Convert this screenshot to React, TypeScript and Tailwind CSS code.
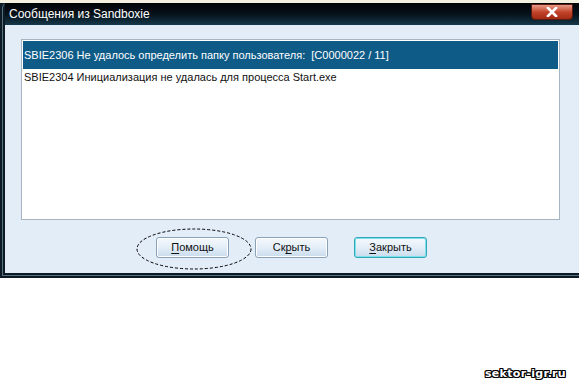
import React from "react";

const Button = ({
  children,
  isDefault = false,
}: {
  children: React.ReactNode;
  isDefault?: boolean;
}) => (
  <div
    className={`w-[73px] h-[21px] rounded-[3px] border flex items-center justify-center text-[11px] text-[#111] bg-gradient-to-b from-[#f4f8fc] via-[#e4eef8] to-[#c9dbec] ${
      isDefault
        ? "border-[#2fa9b8] shadow-[inset_0_0_0_1px_#7fe0ec]"
        : "border-[#8aa2b8] shadow-[inset_0_0_0_1px_#ffffff]"
    }`}
  >
    {children}
  </div>
);

export default function App() {
  return (
    <div className="w-[579px] h-[384px] bg-white relative overflow-hidden font-['Liberation_Sans',Arial,sans-serif]">
      {/* leftover strip of the window behind */}
      <div className="h-[3px] bg-[#f3f0e0]" />

      {/* window */}
      <div className="h-[275px] flex flex-col bg-[#0b1a24] pl-[2px] pb-[2px]">
        <div className="flex-1 flex flex-col bg-[#56707e] pl-px pb-px rounded-tl-[5px]">
          <div className="flex-1 flex flex-col bg-[#0b1a24] pl-[2px] pb-[2px] rounded-tl-[5px]">
            {/* Title bar */}
            <div className="h-[22px] flex items-center relative bg-gradient-to-b from-[#020407] via-[#07121a] to-[#14384b]">
              <span className="text-white text-[12px] pl-[4px]">
                Сообщения из Sandboxie
              </span>
              <div className="absolute right-[6px] top-[1px] w-[42px] h-[16px] rounded-b-[4px] border border-[#5a1a10] bg-gradient-to-b from-[#e79a88] via-[#c2442a] to-[#a32a14] flex items-center justify-center">
                <svg width="12" height="10" viewBox="0 0 12 10">
                  <path
                    d="M2 1 L10 9 M10 1 L2 9"
                    stroke="#ffffff"
                    strokeWidth="2.6"
                    strokeLinecap="square"
                  />
                </svg>
              </div>
            </div>

            {/* Client */}
            <div className="flex-1 flex flex-col bg-[#e3edf8] pl-[16px] pt-[14px]">
              <div className="w-[539px] h-[181px] bg-white border border-[#a7b4c2] p-px text-[11px]">
                <div className="h-[28px] bg-[#0f5b88] text-white flex items-center pl-[1px] whitespace-pre">
                  SBIE2306 Не удалось определить папку пользователя:  [C0000022 / 11]
                </div>
                <div className="h-[16px] flex items-center pl-[1px] text-[#111]">
                  SBIE2304 Инициализация не удалась для процесса Start.exe
                </div>
              </div>

              <div className="flex gap-[26px] pl-[135px] pt-[17px]">
                <Button>
                  <span className="underline underline-offset-2">П</span>омощь
                </Button>
                <Button>
                  Ск<span className="underline underline-offset-2">р</span>ыть
                </Button>
                <Button isDefault>
                  <span className="underline underline-offset-2">З</span>акрыть
                </Button>
              </div>
            </div>
          </div>
        </div>
      </div>

      {/* hand-drawn ellipse around the help button */}
      <svg
        className="absolute left-[134px] top-[226px]"
        width="120"
        height="46"
        viewBox="0 0 120 46"
      >
        <ellipse
          cx="60"
          cy="23"
          rx="57"
          ry="20"
          fill="none"
          stroke="#000"
          strokeWidth="1"
          strokeDasharray="3 2"
        />
      </svg>

      {/* watermark */}
      <div className="absolute left-[485px] top-[366px] text-white font-bold text-[11px] font-['DejaVu_Sans',sans-serif] tracking-[0.3px] [text-shadow:1px_0_0_#000,-1px_0_0_#000,0_1px_0_#000,0_-1px_0_#000,1px_1px_0_#000,-1px_-1px_0_#000,1px_-1px_0_#000,-1px_1px_0_#000]">
        sektor-igr.ru
      </div>
    </div>
  );
}
